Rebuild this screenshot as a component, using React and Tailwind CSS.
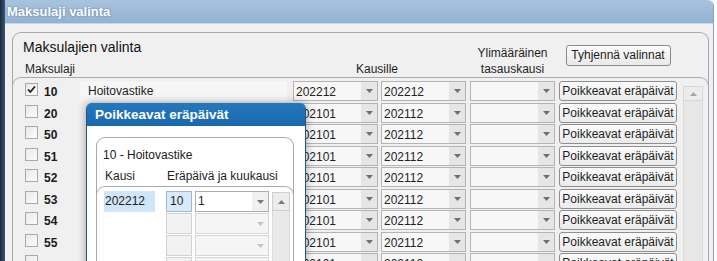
import React from 'react'

const rows = [
  { code: '10', checked: true, name: 'Hoitovastike', from: '202212', to: '202212' },
  { code: '20', from: '202101', to: '202112' },
  { code: '50', from: '202101', to: '202112' },
  { code: '51', from: '202101', to: '202112' },
  { code: '52', from: '202101', to: '202112' },
  { code: '53', from: '202101', to: '202112' },
  { code: '54', from: '202101', to: '202112' },
  { code: '55', from: '202101', to: '202112' },
  { code: '', from: '202101', to: '202112' },
]

function Arrow({ color = '#6f6f6f' }) {
  return (
    <svg width="7" height="4" viewBox="0 0 7 4">
      <path d="M0 0H7L3.5 4Z" fill={color} />
    </svg>
  )
}

function UpArrow({ color = '#9a9a9a' }) {
  return (
    <svg width="7" height="4" viewBox="0 0 7 4">
      <path d="M0 4H7L3.5 0Z" fill={color} />
    </svg>
  )
}

function Checkbox({ checked }) {
  return (
    <div className="mt-[2px] flex h-[13px] w-[13px] shrink-0 items-center justify-center border border-[#a9a9a9] bg-gradient-to-br from-[#e8e8e8] to-[#fdfdfd]">
      {checked && (
        <svg width="11" height="11" viewBox="0 0 11 11">
          <path d="M2 5.5L4.3 8L9 2.5" fill="none" stroke="#1d1d1d" strokeWidth="1.8" />
        </svg>
      )}
    </div>
  )
}

function Combo({ value, className }) {
  return (
    <div className={`flex h-5 w-[85px] shrink-0 border border-[#b4b4b4] bg-[#f7f7f7] ${className}`}>
      <span className="flex-1 pl-[2px] pt-px leading-[18px] text-[#222]">{value}</span>
      <div className="flex w-[16px] items-center justify-center bg-[#e6e6e6]">
        <Arrow />
      </div>
    </div>
  )
}

function ListRow({ row }) {
  return (
    <div className="flex h-[21.5px] shrink-0 items-start pl-[12px]">
      <Checkbox checked={row.checked} />
      <span className="ml-[6px] w-[36px] pt-px font-bold leading-[20px] text-[#1a1a1a]">{row.code}</span>
      <div className={`h-5 w-[207px] pl-[8px] pt-px leading-[19px] ${row.name ? 'bg-[#f6f6f6]' : ''}`}>{row.name}</div>
      <Combo value={row.from} className="ml-[6px]" />
      <Combo value={row.to} className="ml-[3px]" />
      <Combo value="" className="ml-[4px]" />
      <button className="ml-[4px] h-5 w-[118px] shrink-0 rounded-[3px] border border-[#8e8e8e] bg-gradient-to-b from-[#fafafa] to-[#ebebeb] text-center leading-[18px] text-[#1e1e1e]">
        Poikkeavat eräpäivät
      </button>
    </div>
  )
}

function PopupRow({ active }) {
  return (
    <div className="flex h-[22px] shrink-0 items-start pl-[7px]">
      <div className={`h-[21px] w-[51px] leading-[21px] ${active ? 'bg-[#cfe6f8] pl-px' : ''}`}>
        {active ? '202212' : ''}
      </div>
      <div
        className={`ml-[11px] h-[21px] w-[26px] border pl-[3px] leading-[19px] ${
          active ? 'border-[#a3b8cc] bg-[#d6eaf9]' : 'border-[#d2d2d2] bg-[#f2f2f2]'
        }`}
      >
        {active ? '10' : ''}
      </div>
      <div
        className={`ml-[3px] flex h-[21px] w-[74px] border ${
          active ? 'border-[#adadad] bg-white' : 'border-[#d6d6d6] bg-[#f5f5f5]'
        }`}
      >
        <span className="flex-1 pl-[2px] leading-[19px]">{active ? '1' : ''}</span>
        <div className={`flex w-[16px] items-center justify-center ${active ? 'bg-[#f0f0f0]' : ''}`}>
          <Arrow color={active ? '#777777' : '#c6c6c6'} />
        </div>
      </div>
    </div>
  )
}

export default function App() {
  return (
    <div className="relative flex h-[261px] w-[717px] overflow-hidden bg-white font-['Liberation_Sans',Arial,sans-serif] text-[12px] text-[#1e1e1e]">
      <div className="w-[5px] shrink-0 bg-gradient-to-r from-[#1b2a42] to-[#3d5474]" />

      <div className="flex w-[709px] shrink-0 flex-col rounded-tr-[6px] border-r border-[#8ea2ba] bg-[#f0f0f0]">
        {/* title bar */}
        <div className="flex h-[24px] shrink-0 items-center rounded-tr-[6px] border-b border-[#c8d8e9] bg-gradient-to-b from-[#a8c3de] to-[#93b2d2] pl-[2px] text-[13px] font-bold text-white [text-shadow:0_0_2px_rgba(40,70,110,0.6)]">
          Maksulaji valinta
        </div>

        {/* outer group */}
        <div className="ml-[7px] mt-[8px] flex w-[697px] flex-1 flex-col rounded-t-[9px] border border-b-0 border-[#a9a9a9]">
          <div className="flex pt-[6px]">
            <div className="flex w-[280px] flex-col pl-[10px]">
              <div className="text-[14px] leading-[16px] text-[#111]">Maksulajien valinta</div>
              <div className="mt-[6px] pl-[2px] leading-[16px]">Maksulaji</div>
            </div>
            <div className="w-[173px] self-end pr-[5px] text-center leading-[16px]">Kausille</div>
            <div className="ml-[4px] w-[85px] self-end text-center leading-[16px]">
              Ylimääräinen
              <br />
              tasauskausi
            </div>
            <div className="ml-[4px] flex w-[118px] justify-center pt-[6px]">
              <button className="h-[21px] w-[105px] rounded-[3px] border border-[#8a8a8a] bg-gradient-to-b from-[#fafafa] to-[#e9e9e9] leading-[19px]">
                Tyhjennä valinnat
              </button>
            </div>
          </div>

          {/* list group */}
          <div className="-mx-px flex flex-1 rounded-t-[9px] border border-b-0 border-[#a9a9a9] pt-[3px]">
            <div className="flex flex-col">
              {rows.map((r, i) => (
                <ListRow key={i} row={r} />
              ))}
            </div>
            <div className="ml-[6px] mt-[5px] flex w-[20px] flex-col">
              <div className="flex h-[15px] items-center justify-center border border-[#d6d6d6] bg-[#ececec]">
                <UpArrow color="#a6a6a6" />
              </div>
              <div className="flex-1 border-x border-[#dadada] bg-[#e7e7e7]" />
            </div>
          </div>
        </div>
      </div>
      <div className="flex-1 bg-white" />

      {/* popup window */}
      <div className="absolute left-[86px] top-[103px] flex h-[170px] w-[220px] flex-col rounded-t-[6px] border-x border-[#2a5686] bg-white shadow-[0_0_8px_rgba(0,0,0,0.35)]">
        <div className="h-[23px] shrink-0 rounded-t-[5px] bg-gradient-to-b from-[#2378bd] to-[#1a68ac] pl-[8px] text-[13.5px] font-bold leading-[23px] text-white">
          Poikkeavat eräpäivät
        </div>
        <div className="ml-[9px] mt-[11px] flex w-[198px] flex-1 flex-col rounded-t-[9px] border border-b-0 border-[#a9a9a9]">
          <div className="pl-[6px] pt-[9px] leading-[16px] text-[#1a1a1a]">10 - Hoitovastike</div>
          <div className="mt-[5px] flex pl-[6px] leading-[16px]">
            <span className="w-[64px] pl-[2px]">Kausi</span>
            <span>Eräpäivä ja kuukausi</span>
          </div>
          <div className="-mx-px mt-[2px] flex flex-1 rounded-t-[9px] border border-b-0 border-[#a9a9a9] pt-[4px]">
            <div className="flex flex-col">
              <PopupRow active />
              <PopupRow />
              <PopupRow />
              <PopupRow />
            </div>
            <div className="ml-[3px] mt-px flex w-[18px] flex-col">
              <div className="flex h-[19px] items-center justify-center border border-[#cfcfcf] bg-[#ececec]">
                <UpArrow color="#7a7a7a" />
              </div>
              <div className="flex-1 border-x border-[#dadada] bg-[#e9e9e9]" />
            </div>
          </div>
        </div>
      </div>
    </div>
  )
}
